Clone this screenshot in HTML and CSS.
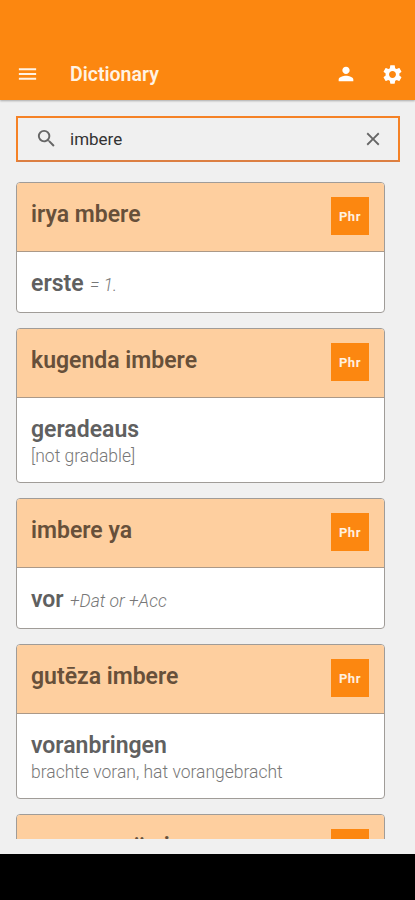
FILE: index.html
```html
<!DOCTYPE html>
<html lang="en">
<head>
    <meta charset="UTF-8">
    <meta name="viewport" content="width=device-width, initial-scale=1.0">
    <title>Dictionary</title>
    <link rel="stylesheet" href="styles.css">
</head>
<body>
    <header class="toolbar">
        <svg class="icon menu" viewBox="0 0 24 24"><path d="M3 18h18v-2H3v2zm0-5h18v-2H3v2zm0-7v2h18V6H3z"/></svg>
        <h1>Dictionary</h1>
        <svg class="icon user" viewBox="0 0 24 24"><path d="M12 12c2.21 0 4-1.79 4-4s-1.79-4-4-4-4 1.790-4 4 1.790 4 4 4zm0 2c-2.670 0-8 1.340-8 4v2h16v-2c0-2.660-5.330-4-8-4z"/></svg>
        <svg class="icon settings" viewBox="0 0 24 24"><path d="M19.14 12.94c.04-.3.06-.61.06-.94s-.02-.64-.07-.94l2.030-1.580c.18-.14.23-.41.12-.61l-1.920-3.320c-.12-.22-.37-.29-.59-.22l-2.390.96c-.5-.38-1.030-.7-1.620-.94l-.36-2.540c-.04-.24-.24-.41-.48-.41h-3.840c-.24 0-.43.17-.47.41l-.36 2.540c-.59.24-1.130.57-1.620.94l-2.390-.96c-.22-.08-.47 0-.59.22L2.740 8.870c-.12.21-.08.47.12.61l2.030 1.580c-.05.3-.09.63-.09.94s.02.64.07.94l-2.030 1.580c-.18.14-.23.41-.12.61l1.920 3.320c.12.22.37.29.59.22l2.390-.96c.5.38 1.030.7 1.620.94l.36 2.540c.05.24.24.41.48.41h3.840c.24 0 .44-.17.47-.41l.36-2.540c.59-.24 1.130-.56 1.620-.94l2.390.96c.22.08.47 0 .59-.22l1.920-3.320c.12-.22.07-.47-.12-.61l-2.010-1.580zM12 15.600c-1.980 0-3.600-1.620-3.600-3.600s1.620-3.600 3.600-3.600 3.600 1.620 3.600 3.600-1.620 3.600-3.600 3.600z"/></svg>
    </header>

    <main>
        <div class="search">
            <svg class="icon lens" viewBox="0 0 24 24"><path d="M15.500 14h-.79l-.28-.27A6.471 6.471 0 0 0 16 9.500 6.500 6.500 0 1 0 9.500 16c1.610 0 3.090-.59 4.230-1.570l.27.28v.79l5 4.990L20.490 19l-4.990-5zm-6 0C7.010 14 5 11.990 5 9.500S7.010 5 9.500 5 14 7.010 14 9.500 11.990 14 9.500 14z"/></svg>
            <span class="query">imbere</span>
            <svg class="icon clear" viewBox="0 0 24 24"><path d="M19 6.410L17.590 5 12 10.590 6.410 5 5 6.410 10.590 12 5 17.590 6.410 19 12 13.410 17.590 19 19 17.590 13.410 12z"/></svg>
        </div>

        <div class="results">
            <div class="card">
                <div class="card-head"><h2>irya mbere</h2><span class="tag">Phr</span></div>
                <div class="card-body"><b>erste</b> <i>= 1.</i></div>
            </div>
            <div class="card">
                <div class="card-head"><h2>kugenda imbere</h2><span class="tag">Phr</span></div>
                <div class="card-body tall"><b>geradeaus</b><p>[not gradable]</p></div>
            </div>
            <div class="card">
                <div class="card-head"><h2>imbere ya</h2><span class="tag">Phr</span></div>
                <div class="card-body"><b>vor</b> <i>+Dat or +Acc</i></div>
            </div>
            <div class="card">
                <div class="card-head"><h2>gutēza imbere</h2><span class="tag">Phr</span></div>
                <div class="card-body tall"><b>voranbringen</b><p>brachte voran, hat vorangebracht</p></div>
            </div>
            <div class="card">
                <div class="card-head"><h2>uswana wäu i</h2><span class="tag">Phr</span></div>
                <div class="card-body"></div>
            </div>
        </div>
    </main>
    <div class="navbar"></div>
</body>
</html>
```
FILE: styles.css
```css
*{
    box-sizing: border-box;
}
body{
    font-family: Roboto, Arial, sans-serif;
    margin: 0;
    height: 900px;
    display: flex;
    flex-direction: column;
    overflow: hidden;
    background-color: #f0f0f0;
}
h1, h2, p{
    margin: 0;
}
.icon{
    width: 24px;
    height: 24px;
    flex: none;
    fill: currentColor;
}
.toolbar{
    height: 100px;
    flex: none;
    display: flex;
    align-items: center;
    padding: 48px 11px 0 16px;
    color: #fff3e4;
    background-color: #fc8710;
    box-shadow: 0 1px 2px rgba(0, 0, 0, 0.3);
}
.toolbar h1{
    flex: 1;
    margin-left: 31px;
    padding-top: 1px;
    font-size: 19.5px;
    font-weight: 600;
    line-height: 24px;
}
.menu{
    width: 23px;
}
.user{
    width: 22px;
    height: 22px;
    margin-right: 24px;
    color: #fff;
}
.settings{
    width: 23px;
    height: 23px;
    color: #fff;
}
main{
    height: 739px;
    flex: none;
    padding: 16px 16px 0;
    overflow: hidden;
}
.search{
    width: 384px;
    height: 46px;
    display: flex;
    align-items: center;
    padding: 0 14px 1px 17px;
    border: 2px solid #f58226;
    border-bottom-color: #dc7f42;
    color: #666;
}
.lens{
    width: 23px;
    height: 23px;
}
.query{
    flex: 1;
    margin-left: 12px;
    font-size: 17px;
    color: #333;
}
.clear{
    width: 22px;
    height: 22px;
}
.results{
    display: flex;
    flex-direction: column;
    gap: 15px;
    width: 369px;
    padding-top: 20px;
}
.card{
    flex: none;
    border: 1px solid #a09c98;
    border-radius: 4px;
    overflow: hidden;
    background-color: #fff;
}
.card-head{
    height: 69px;
    display: flex;
    justify-content: space-between;
    align-items: flex-start;
    padding: 14px 15px 0 14px;
    border-bottom: 1px solid #ab9988;
    background-color: #fecf9f;
}
.card-head h2{
    padding-top: 4px;
    font-size: 23px;
    font-weight: 600;
    line-height: 28px;
    color: #67503a;
}
.tag{
    width: 38px;
    height: 38px;
    font-size: 13px;
    font-weight: 700;
    line-height: 39px;
    letter-spacing: 0.6px;
    text-align: center;
    color: #fff0e0;
    background-color: #fc8710;
}
.card-body{
    height: 60px;
    padding: 18px 14px 0;
    font-size: 17.5px;
    line-height: 28px;
    color: #777;
}
.tall{
    height: 84px;
}
.card-body b{
    font-size: 23px;
    font-weight: 600;
    color: #606060;
}
.card-body i{
    font-weight: 300;
    margin-left: 2px;
}
.card-body p{
    font-weight: 300;
    line-height: 23px;
}
.navbar{
    height: 46px;
    flex: none;
    margin-top: 15px;
    background-color: #000;
}
```
